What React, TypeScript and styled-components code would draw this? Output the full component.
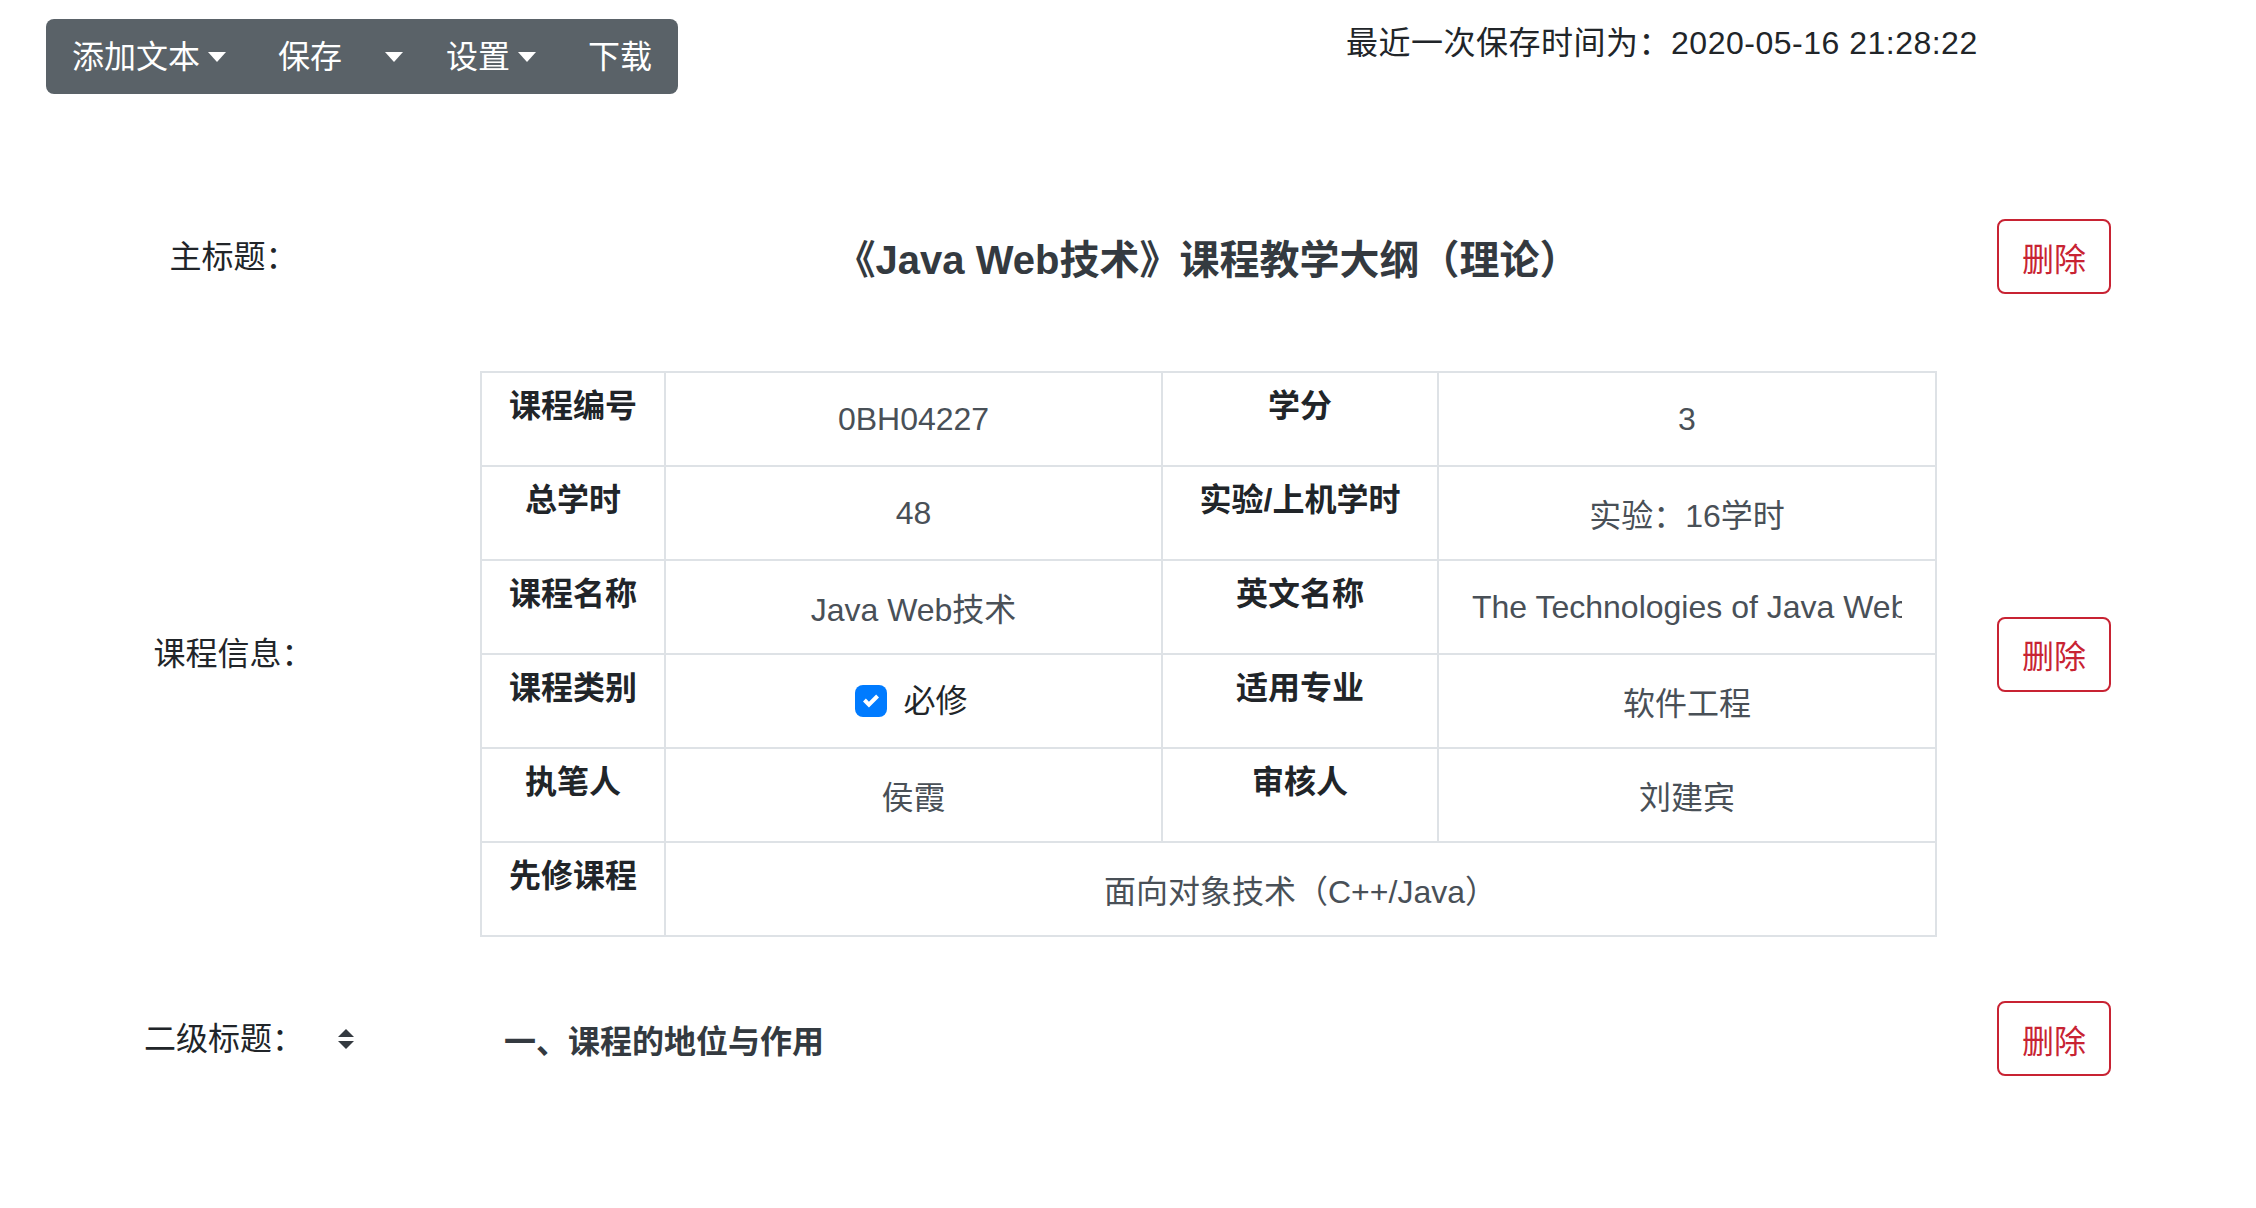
import React from "react";
import styled, { createGlobalStyle } from "styled-components";

const GlobalStyle = createGlobalStyle`
  * { box-sizing: border-box; }
  html, body { margin: 0; padding: 0; background: #fff; }
  body {
    font-family: "Liberation Sans", "Noto Sans CJK SC", sans-serif;
    font-size: 32px;
    line-height: 1.5;
    color: #212529;
  }
`;

const Page = styled.div`
  width: 2256px;
  height: 1208px;
  overflow: hidden;
`;

const TopBar = styled.div`
  display: flex;
  align-items: flex-start;
  padding: 19px 0 0 46px;
`;

const Toolbar = styled.div`
  display: flex;
  height: 75px;
  background: #5a6268;
  border-radius: 8px;
`;

const ToolButton = styled.div<{ $pad?: number }>`
  display: flex;
  align-items: center;
  padding: 0 ${(p) => p.$pad ?? 26}px;
  color: #fff;
  font-size: 32px;
  cursor: pointer;
`;

const Caret = styled.span<{ $gap?: number }>`
  display: inline-block;
  margin-left: ${(p) => p.$gap ?? 8}px;
  border-top: 10px solid #fff;
  border-left: 9px solid transparent;
  border-right: 9px solid transparent;
`;

const SaveTime = styled.div`
  margin-left: 668px;
  font-size: 32px;
  line-height: 48px;
  letter-spacing: 0.5px;
  color: #212529;
`;

const Row = styled.div<{ $mt: number }>`
  display: grid;
  grid-template-columns: 480px 1455px 176px;
  align-items: center;
  margin-top: ${(p) => p.$mt}px;
`;

const Label = styled.div`
  padding-right: 13px;
  text-align: center;
  color: #212529;
`;

const SelectBox = styled.div`
  display: flex;
  align-items: center;
  justify-content: space-between;
  width: 258px;
  margin-left: 120px;
  padding: 0 24px;
  height: 74px;
  color: #212529;
`;

const TextInput = styled.input<{ $size?: number; $align?: string; $bold?: boolean; $color?: string }>`
  display: block;
  width: 100%;
  height: 74px;
  padding: 0 24px;
  border: none;
  outline: none;
  background: transparent;
  font-family: inherit;
  font-size: ${(p) => p.$size ?? 32}px;
  font-weight: ${(p) => (p.$bold ? 700 : 400)};
  color: ${(p) => p.$color ?? "#495057"};
  text-align: ${(p) => p.$align ?? "center"};
`;

const DeleteButton = styled.button`
  justify-self: end;
  width: 114px;
  height: 75px;
  border: 2px solid #c82333;
  border-radius: 8px;
  background: transparent;
  color: #c82333;
  font-family: inherit;
  font-size: 32px;
  cursor: pointer;
`;

const Table = styled.table`
  width: 1455px;
  border-collapse: collapse;
  table-layout: fixed;
`;

const Th = styled.th`
  border: 2px solid #dee2e6;
  padding: 9px;
  vertical-align: top;
  text-align: center;
  font-weight: 700;
  color: #212529;
  line-height: 48px;
`;

const Td = styled.td`
  border: 2px solid #dee2e6;
  padding: 9px;
  vertical-align: middle;
`;

const CheckWrap = styled.label`
  display: flex;
  align-items: center;
  justify-content: center;
  height: 74px;
  color: #212529;
`;

const CheckBox = styled.span`
  display: inline-flex;
  align-items: center;
  justify-content: center;
  width: 32px;
  height: 32px;
  margin-right: 16px;
  margin-left: -4px;
  border-radius: 8px;
  background: #007bff;
`;

const rows: [string, string, string, string][] = [
  ["课程编号", "0BH04227", "学分", "3"],
  ["总学时", "48", "实验/上机学时", "实验：16学时"],
  ["课程名称", "Java Web技术", "英文名称", "The Technologies of Java Web"],
];

function App() {
  return (
    <Page>
      <GlobalStyle />
      <TopBar>
        <Toolbar>
          <ToolButton>
            添加文本
            <Caret />
          </ToolButton>
          <ToolButton>保存</ToolButton>
          <ToolButton $pad={17}>
            <Caret $gap={0} />
          </ToolButton>
          <ToolButton>
            设置
            <Caret />
          </ToolButton>
          <ToolButton>下载</ToolButton>
        </Toolbar>
        <SaveTime>最近一次保存时间为：2020-05-16 21:28:22</SaveTime>
      </TopBar>

      <Row $mt={125}>
        <Label>主标题：</Label>
        <TextInput
          defaultValue="《Java Web技术》课程教学大纲（理论）"
          $size={40}
          $bold
          $color="#343a40"
        />
        <DeleteButton>删除</DeleteButton>
      </Row>

      <Row $mt={77}>
        <Label>课程信息：</Label>
        <Table>
          <colgroup>
            <col style={{ width: 184 }} />
            <col style={{ width: 497 }} />
            <col style={{ width: 276 }} />
            <col style={{ width: 498 }} />
          </colgroup>
          <tbody>
            {rows.map(([a, b, c, d]) => (
              <tr key={a}>
                <Th>{a}</Th>
                <Td>
                  <TextInput defaultValue={b} />
                </Td>
                <Th>{c}</Th>
                <Td>
                  <TextInput defaultValue={d} />
                </Td>
              </tr>
            ))}
            <tr>
              <Th>课程类别</Th>
              <Td>
                <CheckWrap>
                  <CheckBox>
                    <svg width="16" height="16" viewBox="0 0 8 8">
                      <path
                        fill="#fff"
                        d="M6.564.75l-3.59 3.612-1.538-1.55L0 4.26 2.974 7.25 8 2.193z"
                      />
                    </svg>
                  </CheckBox>
                  必修
                </CheckWrap>
              </Td>
              <Th>适用专业</Th>
              <Td>
                <TextInput defaultValue="软件工程" />
              </Td>
            </tr>
            <tr>
              <Th>执笔人</Th>
              <Td>
                <TextInput defaultValue="侯霞" />
              </Td>
              <Th>审核人</Th>
              <Td>
                <TextInput defaultValue="刘建宾" />
              </Td>
            </tr>
            <tr>
              <Th>先修课程</Th>
              <Td colSpan={3}>
                <TextInput defaultValue="面向对象技术（C++/Java）" />
              </Td>
            </tr>
          </tbody>
        </Table>
        <DeleteButton>删除</DeleteButton>
      </Row>

      <Row $mt={64}>
        <SelectBox>
          <span>二级标题：</span>
          <svg width="16" height="20" viewBox="0 0 4 5">
            <path fill="#343a40" d="M2 0L0 2h4zm0 5L0 3h4z" />
          </svg>
        </SelectBox>
        <TextInput
          defaultValue="一、课程的地位与作用"
          $align="left"
          $bold
          $color="#343a40"
        />
        <DeleteButton>删除</DeleteButton>
      </Row>
    </Page>
  );
}

export default App;
